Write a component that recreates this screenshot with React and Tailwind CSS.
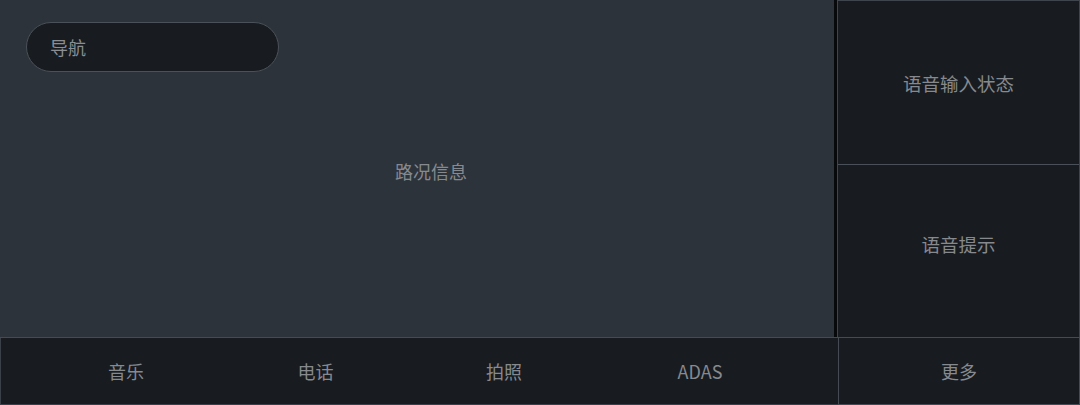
import React from "react";

const font = { fontFamily: '"Noto Sans CJK SC", "Noto Sans", sans-serif' };

export default function App() {
  const items = [
    ["音乐", "w-[190px]"],
    ["电话", "w-[189px]"],
    ["拍照", "w-[188px]"],
    ["ADAS", "w-[204px]"],
  ];
  return (
    <div
      className="w-[1080px] h-[405px] bg-[#181c21] flex flex-col overflow-hidden text-[18px] text-[#868a8f]"
      style={font}
    >
      <div className="flex h-[337px]">
        <div className="w-[834px] h-full bg-[#2d333b] flex flex-col">
          <div className="pt-[22px] pl-[26px]">
            <div className="w-[253px] h-[50px] rounded-full bg-[#181c21] border border-[#4b5159] flex items-center pl-[23px] text-[#8a8e93]">
              导航
            </div>
          </div>
          <div className="flex-1 flex items-center justify-center pl-[28px] pb-[66px]">
            路况信息
          </div>
        </div>
        <div className="w-[3px] h-full bg-[#08090b]" />
        <div className="flex-1 flex flex-col border-l border-t border-r border-[#3f454d]">
          <div className="h-[164px] border-b border-[#4a5058] flex items-center justify-center pt-[2px] text-[18.5px]">
            语音输入状态
          </div>
          <div className="flex-1 flex items-center justify-center pb-[12px] text-[18.5px]">
            语音提示
          </div>
        </div>
      </div>
      <div className="flex flex-1 border-t border-[#454b53]">
        <div className="w-[838px] flex pl-[30px] border-l border-b border-[#3a4048]">
          {items.map(([t, w], i) => (
            <div key={i} className={`${w} flex items-center justify-center`}>
              {t}
            </div>
          ))}
        </div>
        <div className="flex-1 flex items-center justify-center border-l border-r border-b border-[#454b53]">
          更多
        </div>
      </div>
    </div>
  );
}
